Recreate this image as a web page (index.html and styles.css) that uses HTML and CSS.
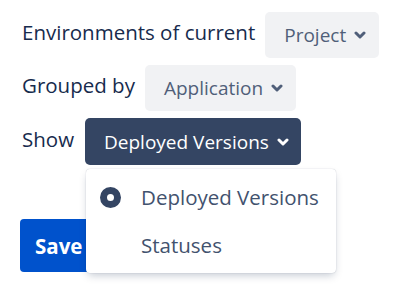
FILE: index.html
```html
<!DOCTYPE html>
<html lang="en">
<head>
    <meta charset="UTF-8">
    <title>Environment settings</title>
    <link rel="stylesheet" href="styles.css">
</head>
<body>
    <div class="settings">
        <div class="row">
            <span class="label">Environments of current</span>
            <button class="select">Project
                <svg class="chevron" viewBox="0 0 12 8"><path d="M2 2l4 4 4-4"/></svg>
            </button>
        </div>
        <div class="row">
            <span class="label">Grouped by</span>
            <button class="select">Application
                <svg class="chevron" viewBox="0 0 12 8"><path d="M2 2l4 4 4-4"/></svg>
            </button>
        </div>
        <div class="row">
            <span class="label">Show</span>
            <div class="dropdown">
                <button class="select open">Deployed Versions
                    <svg class="chevron" viewBox="0 0 12 8"><path d="M2 2l4 4 4-4"/></svg>
                </button>
                <div class="menu">
                    <div class="menu-item selected">
                        <span class="radio"></span>
                        Deployed Versions
                    </div>
                    <div class="menu-item">
                        <span class="radio"></span>
                        Statuses
                    </div>
                </div>
            </div>
        </div>
        <button class="save">Save</button>
    </div>
</body>
</html>
```

FILE: styles.css
```css
body {
    margin: 0;
    padding: 12px 20px;
    font-family: 'Open Sans', sans-serif;
    color: #172b4d;
    background: #fff;
}
.row {
    display: flex;
    align-items: center;
    gap: 10px;
    margin-bottom: 7px;
}
.label {
    font-size: 20.5px;
    padding: 0 0 6px 2px;
}
.select {
    display: inline-flex;
    align-items: center;
    gap: 8px;
    height: 46px;
    padding: 0 13px 0 19px;
    border: none;
    border-radius: 5px;
    background: #f1f2f4;
    color: #505f79;
    font-family: inherit;
    font-size: 19px;
}
.chevron {
    width: 12px;
    height: 8px;
    fill: none;
    stroke: currentColor;
    stroke-width: 3;
    stroke-linecap: round;
    stroke-linejoin: round;
}
.select.open {
    height: 47px;
    padding-right: 12px;
    background: #344563;
    color: #fff;
}
.dropdown {
    position: relative;
    margin-left: 1px;
}
.menu {
    position: absolute;
    top: 51px;
    left: 1px;
    width: 250px;
    padding: 4px 0;
    background: #fff;
    border-radius: 4px;
    box-shadow: 0 4px 8px -2px rgba(9, 30, 66, 0.25), 0 0 1px rgba(9, 30, 66, 0.31);
    z-index: 2;
}
.menu-item {
    display: flex;
    align-items: center;
    gap: 20px;
    height: 48px;
    padding-left: 14px;
    font-size: 20.5px;
    color: #42526e;
}
.radio {
    width: 21px;
    height: 21px;
    box-sizing: border-box;
    border-radius: 50%;
}
.menu-item.selected .radio {
    border: 7px solid #344563;
    background: #fff;
}
.save {
    margin-top: 47px;
    height: 53px;
    padding: 0 15px;
    border: none;
    border-radius: 4px;
    background: #0052cc;
    color: #fff;
    font-family: inherit;
    font-size: 20.5px;
    font-weight: 700;
}
```
